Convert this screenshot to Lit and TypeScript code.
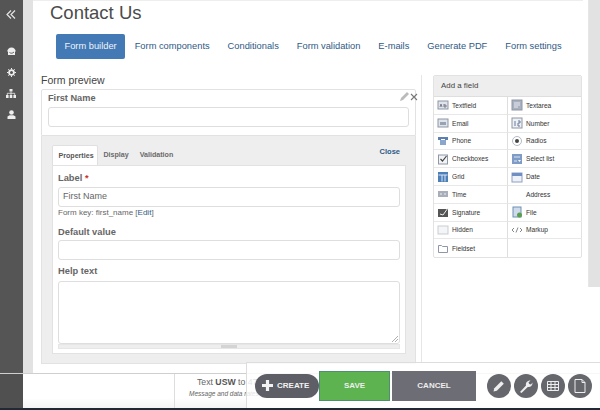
import { LitElement, html, css, svg } from 'lit';
import { customElement } from 'lit/decorators.js';

const fieldIcons: Record<string, unknown> = {
  textfield: svg`<rect x="1" y="2" width="10" height="8" fill="#dfe3ea" stroke="#8e97a6"/><path d="M3 8l1-3 1 3M7 5v3h2V6H7" fill="none" stroke="#667" stroke-width=".8"/>`,
  textarea: svg`<rect x="1" y="1" width="10" height="10" fill="#a9b0bf" stroke="#8e97a6"/><path d="M3 4h6M3 6h6M3 8h4" stroke="#e8ebf0"/>`,
  email: svg`<rect x="1" y="2" width="10" height="8" fill="#dfe3ea" stroke="#8e97a6"/><path d="M3 5h6v3H3z" fill="#98a2b3"/>`,
  number: svg`<rect x="1" y="1" width="10" height="10" fill="#eef0f4" stroke="#8e97a6"/><path d="M4 4v5M7 4h2v2H7v3h2" fill="none" stroke="#667a99"/>`,
  phone: svg`<path d="M1 5V2h10v3H8V4H4v1z" fill="#5b7fb0"/><rect x="3" y="5" width="6" height="5" fill="#8aa6cc"/>`,
  radios: svg`<circle cx="6" cy="6" r="4.500" fill="#fff" stroke="#b5bbc6"/><circle cx="6" cy="6" r="2" fill="#444"/>`,
  checkboxes: svg`<rect x="1.500" y="2" width="9" height="9" fill="#f2f3f5" stroke="#8e97a6"/><path d="M3.500 6l2 2 4-5" fill="none" stroke="#444" stroke-width="1.200"/>`,
  select: svg`<rect x="1" y="1" width="10" height="10" fill="#7e9cc6"/><path d="M3 4h6M3 8h3" stroke="#dce6f3"/><path d="M7 7h3l-1.500 2z" fill="#fff"/>`,
  grid: svg`<rect x="1" y="1" width="10" height="10" fill="#4d7fb8"/><path d="M1.500 4h9M5 4v6.500M8 4v6.500" stroke="#dce6f3"/>`,
  date: svg`<rect x="1" y="2" width="10" height="9" fill="#eef1f7" stroke="#8ea0c4"/><rect x="1" y="2" width="10" height="3" fill="#6f8fc4"/>`,
  time: svg`<rect x="1" y="3" width="10" height="6" fill="#a9afba"/><path d="M3 6h2M7 6h2" stroke="#eee"/>`,
  signature: svg`<rect x="1" y="3" width="10" height="8" fill="#555"/><path d="M3 8l3 1 5-7" fill="none" stroke="#eee"/>`,
  file: svg`<rect x="2" y="1" width="8" height="10" fill="#cfdbec" stroke="#6f8fb8"/><circle cx="8.500" cy="9" r="2.500" fill="#5aa04a"/>`,
  hidden: svg`<rect x="1" y="2" width="10" height="8" fill="#f4f5f6" stroke="#c9cdd3"/>`,
  markup: svg`<path d="M3 4L1 6l2 2M9 4l2 2-2 2M7 3.500L5 8.500" fill="none" stroke="#888"/>`,
  fieldset: svg`<path d="M1.500 3.500h3l1 1h5v6h-9z" fill="#fff" stroke="#8e97a6"/>`,
};

const fields: [string, string | null][] = [
  ['Textfield', 'textfield'], ['Textarea', 'textarea'],
  ['Email', 'email'], ['Number', 'number'],
  ['Phone', 'phone'], ['Radios', 'radios'],
  ['Checkboxes', 'checkboxes'], ['Select list', 'select'],
  ['Grid', 'grid'], ['Date', 'date'],
  ['Time', 'time'], ['Address', null],
  ['Signature', 'signature'], ['File', 'file'],
  ['Hidden', 'hidden'], ['Markup', 'markup'],
  ['Fieldset', 'fieldset'], ['', null],
];

const tabs = ['Form builder', 'Form components', 'Conditionals', 'Form validation', 'E-mails', 'Generate PDF', 'Form settings'];

@customElement('app-root')
export class AppRoot extends LitElement {
  static styles = css`
    :host {
      display: block;
      width: 600px;
      height: 410px;
      position: relative;
      overflow: hidden;
      background: #fff;
      font-family: 'Liberation Sans', Arial, sans-serif;
      color: #555;
    }
    * { box-sizing: border-box; }

    .top { display: flex; height: 373px; }
    .side {
      width: 23px;
      flex: none;
      background: #555;
      display: flex;
      flex-direction: column;
      align-items: center;
      padding: 10px 1px 0 0;
    }
    .side.low { background: #505050; padding: 0; }
    .side .toggle { margin-bottom: 28px; display: block; }
    .side .nav { margin-bottom: 12px; display: block; }
    .gutter { width: 10px; flex: none; background: #e2e2e2; }
    .gutter.right { width: 9px; }
    .main {
      flex: 1;
      min-width: 0;
      background: #fff;
      border-top: 1px solid #eee;
      padding: 0 0 0 8px;
    }

    h1 {
      margin: 0 0 0 9px;
      font-size: 18.500px;
      line-height: 24px;
      font-weight: 400;
      color: #4b4b4b;
    }
    .tabs { display: flex; gap: 1px; margin: 9px 0 0 15px; height: 25px; }
    .tab {
      padding: 0 8.500px;
      line-height: 25px;
      font-size: 9.300px;
      color: #2f5a85;
      border-radius: 2px;
      white-space: nowrap;
    }
    .tab.active { background: #4379b4; color: #eef4fa; }

    .cols { display: flex; margin-top: 16px; }
    .left { width: 375px; flex: none; margin-top: -2px; }
    .left h2 {
      margin: 0 0 2px;
      font-size: 10.500px;
      font-weight: 400;
      line-height: 14px;
      color: #444;
    }
    .preview {
      height: 47px;
      border: 1px solid #e2e2e2;
      border-radius: 2px 2px 0 0;
      padding: 2px 6px 0;
      position: relative;
    }
    .preview b { display: block; font-size: 9.200px; line-height: 13px; color: #666; }
    .preview .control { margin-top: 2px; height: 20px; width: 361px; }
    .tools { position: absolute; right: -3px; top: 1px; display: flex; align-items: center; gap: 0; }

    .control {
      display: block;
      border: 1px solid #dedede;
      border-radius: 3px;
      background: #fff;
      font-size: 9px;
      line-height: 17px;
      padding-left: 4px;
      color: #666;
    }

    .dialog {
      height: 228px;
      background: #eee;
      border: 1px solid #e2e2e2;
      border-top: none;
      padding: 9px 10px 0;
    }
    .dlg-tabs { display: flex; align-items: flex-end; height: 20px; }
    .dlg-tab {
      height: 20px;
      line-height: 20px;
      padding: 0 5.500px;
      font-size: 7.100px;
      font-weight: 700;
      color: #6a6a6a;
    }
    .dlg-tab.active {
      background: #fff;
      border: 1px solid #e0e0e0;
      border-bottom: none;
      border-radius: 2px 2px 0 0;
      color: #555;
      width: 46px;
    }
    .close { margin-left: auto; align-self: flex-start; margin-right: 5px; font-size: 7.500px; font-weight: 700; line-height: 14px; color: #2f5a85; }
    .panel {
      height: 189px;
      width: 354px;
      background: #fff;
      border: 1px solid #e2e2e2;
      padding: 5px 5px 0;
    }
    .panel .name { font-size: 9.300px; font-weight: 700; line-height: 14px; color: #666; }
    .panel .name i { color: #c9302c; font-style: normal; }
    .panel .control { height: 20px; width: 342px; margin-top: 2px; }
    .panel .after-hint + .control { margin-top: 1px; }
    .hint { font-size: 8px; line-height: 12px; color: #666; }
    .hint a { color: #2f5a85; }
    .after-hint { margin-top: 6px; }
    .after-input { margin-top: 4px; }
    .panel .area { height: 63px; position: relative; margin-top: 3px; }
    .grip { height: 5px; width: 342px; background: #eee; border: 1px solid #e6e6e6; display: flex; justify-content: center; }
    .grip span { width: 16px; background: #d4d4d4; }
    .corner { position: absolute; right: 1px; bottom: 1px; display: block; }

    .right {
      border-left: 1px solid #e6e6e6;
      margin-left: 5px;
      padding-left: 11px;
      height: 287px;
    }
    .card { width: 149px; border: 1px solid #e2e2e2; border-radius: 2px; }
    .card header {
      height: 21px;
      background: #eee;
      border-bottom: 1px solid #dedede;
      font-size: 7.900px;
      line-height: 20px;
      padding-left: 7px;
      color: #444;
    }
    .grid { display: grid; grid-template-columns: 74px 74px; }
    .field {
      height: 17.800px;
      display: flex;
      align-items: center;
      gap: 3px;
      padding-left: 3px;
      font-size: 6.600px;
      color: #333;
      border-bottom: 1px solid #e8e8e8;
    }
    .field:nth-child(odd) { border-right: 1px solid #dedede; }
    .field:nth-last-child(-n + 2) { border-bottom: none; }
    .field svg { flex: none; }
    .field .none { width: 12px; flex: none; }

    .footer {
      height: 35px;
      display: flex;
      border-top: 1px solid #cfcfcf;
      background: linear-gradient(#fff 70%, #f4f4f4);
    }
    .footer .blank { width: 152px; border-right: 1px solid #ddd; flex: none; }
    .sms { padding: 2px 0 0 14px; white-space: nowrap; }
    .sms p { margin: 0; font-size: 8.700px; line-height: 13px; text-indent: 8px; color: #666; }
    .sms b { color: #555; }
    .sms small { display: block; font-size: 6.500px; line-height: 9px; font-style: italic; color: #666; }
    .edge { height: 2px; background: #1f2a36; }

    .bar {
      position: absolute;
      left: 246px;
      top: 362px;
      right: 0;
      height: 46px;
      background: rgba(255, 255, 255, .82);
      border-top: 1px solid #ddd;
      border-left: 1px solid #ddd;
      display: flex;
      align-items: center;
      padding: 0 0 0 8px;
    }
    .create {
      width: 64px;
      height: 24px;
      border-radius: 12px;
      background: #5e5f66;
      color: #f2f2f2;
      font-size: 8px;
      font-weight: 700;
      display: flex;
      align-items: center;
      gap: 3px;
      padding-left: 6px;
    }
    .btn {
      height: 30px;
      line-height: 30px;
      text-align: center;
      font-size: 8px;
      font-weight: 700;
      color: #eee;
    }
    .save { width: 71px; background: #5cb34f; border: 1px solid #4f8f70; line-height: 28px; }
    .cancel { width: 84px; background: #6d6d75; margin-left: 2px; }
    .rounds { display: flex; gap: 3px; margin-left: 11px; }
    .round {
      width: 24px;
      height: 24px;
      border-radius: 50%;
      background: #66666d;
      display: flex;
      align-items: center;
      justify-content: center;
    }
  `;

  icon(name: string | null) {
    if (!name) return html`<span class="none"></span>`;
    return html`<svg width="12" height="12" viewBox="0 0 12 12">${fieldIcons[name]}</svg>`;
  }

  render() {
    return html`
      <div class="top">
        <div class="side">
          <svg class="toggle" width="10" height="9" viewBox="0 0 10 9"><path d="M5 .500L1 4.500l4 4M9 .500l-4 4 4 4" fill="none" stroke="#e4e4e4" stroke-width="1.200"/></svg>
          <svg class="nav" width="9" height="9" viewBox="0 0 9 9"><path d="M4.500 .500C7 .500 8.600 2.200 8.800 4.500H8V8H1V4.500H.2C.4 2.200 2 .500 4.500 .500z" fill="#eee"/><path d="M2.500 5.500c1.500 1 3 1 4.500-.5" fill="none" stroke="#555" stroke-width=".9"/></svg>
          <svg class="nav" width="9" height="9" viewBox="0 0 9 9"><circle cx="4.500" cy="4.500" r="2.400" fill="none" stroke="#eee" stroke-width="1.800"/><path d="M4.500 0v9M0 4.500h9M1.300 1.300l6.400 6.400M7.700 1.300L1.300 7.700" stroke="#eee" stroke-width="1" stroke-dasharray="1.500 6"/></svg>
          <svg class="nav" width="10" height="9" viewBox="0 0 10 9"><path d="M3.500 0h3v2.500h-3zM0 6h2.600v3H0zM3.700 6h2.600v3H3.700zM7.400 6H10v3H7.400z" fill="#eee"/><path d="M5 2.500V6M1.300 6V4.300h7.400V6" fill="none" stroke="#eee" stroke-width=".8"/></svg>
          <svg class="nav" width="9" height="9" viewBox="0 0 9 9"><circle cx="4.500" cy="2.500" r="2.300" fill="#eee"/><path d="M.5 9V6.500l2-1.300h4l2 1.300V9z" fill="#eee"/></svg>
        </div>
        <div class="gutter"></div>
        <div class="main">
          <h1>Contact Us</h1>
          <div class="tabs">
            ${tabs.map((t, i) => html`<div class="tab ${i === 0 ? 'active' : ''}">${t}</div>`)}
          </div>
          <div class="cols">
            <div class="left">
              <h2>Form preview</h2>
              <div class="preview">
                <b>First Name</b>
                <div class="control"></div>
                <div class="tools">
                  <svg width="11" height="11" viewBox="0 0 11 11"><path d="M1 10l1-3 6-6 2 2-6 6z" fill="#bbb"/></svg>
                  <svg width="8" height="8" viewBox="0 0 8 8"><path d="M1 1l6 6M7 1L1 7" stroke="#777" stroke-width="1.100"/></svg>
                </div>
              </div>
              <div class="dialog">
                <div class="dlg-tabs">
                  <div class="dlg-tab active">Properties</div>
                  <div class="dlg-tab">Display</div>
                  <div class="dlg-tab">Validation</div>
                  <div class="close">Close</div>
                </div>
                <div class="panel">
                  <div class="name">Label <i>*</i></div>
                  <div class="control">First Name</div>
                  <div class="hint">Form key: first_name [<a>Edit</a>]</div>
                  <div class="name after-hint">Default value</div>
                  <div class="control"></div>
                  <div class="name after-input">Help text</div>
                  <div class="control area">
                    <svg class="corner" width="7" height="7" viewBox="0 0 7 7"><path d="M1 7l6-6M4 7l3-3" stroke="#999" stroke-width=".8"/></svg>
                  </div>
                  <div class="grip"><span></span></div>
                </div>
              </div>
            </div>
            <div class="right">
              <div class="card">
                <header>Add a field</header>
                <div class="grid">
                  ${fields.map(([label, icon]) => html`<div class="field">${this.icon(icon)}<span>${label}</span></div>`)}
                </div>
              </div>
            </div>
          </div>
        </div>
        <div class="gutter right"></div>
      </div>
      <div class="footer">
        <div class="side low"></div>
        <div class="blank"></div>
        <div class="sms">
          <p>Text <b>USW</b> to 47177</p>
          <small>Message and data rates may apply</small>
        </div>
      </div>
      <div class="edge"></div>
      <div class="bar">
        <div class="create">
          <svg width="13" height="13" viewBox="0 0 13 13"><path d="M6.500 1v11M1 6.500h11" stroke="#f2f2f2" stroke-width="3.200"/></svg>
          CREATE
        </div>
        <div class="btn save">SAVE</div>
        <div class="btn cancel">CANCEL</div>
        <div class="rounds">
          <div class="round"><svg width="14" height="14" viewBox="0 0 14 14"><path d="M1.500 12.500l.8-3.300 7-7 2.500 2.500-7 7z" fill="#eee"/></svg></div>
          <div class="round"><svg width="16" height="16" viewBox="0 0 16 16"><path d="M2 14l6-6.500c-.6-2.500 1-5 4.500-5L10.500 4.500l.8 1.500 1.700.5L14.500 4.500c.3 3-2 5-4.700 4.500L3.500 15z" fill="#eee"/></svg></div>
          <div class="round"><svg width="14" height="14" viewBox="0 0 14 14"><path d="M1.500 2.500h11v9h-11zM1.500 5.500h11M1.500 8.500h11M5 2.500v9M9 2.500v9" fill="none" stroke="#eee"/></svg></div>
          <div class="round"><svg width="14" height="16" viewBox="0 0 14 16"><path d="M2 1.500h7l3 3v10H2zM9 1.500v3h3" fill="none" stroke="#eee"/></svg></div>
        </div>
      </div>
    `;
  }
}
